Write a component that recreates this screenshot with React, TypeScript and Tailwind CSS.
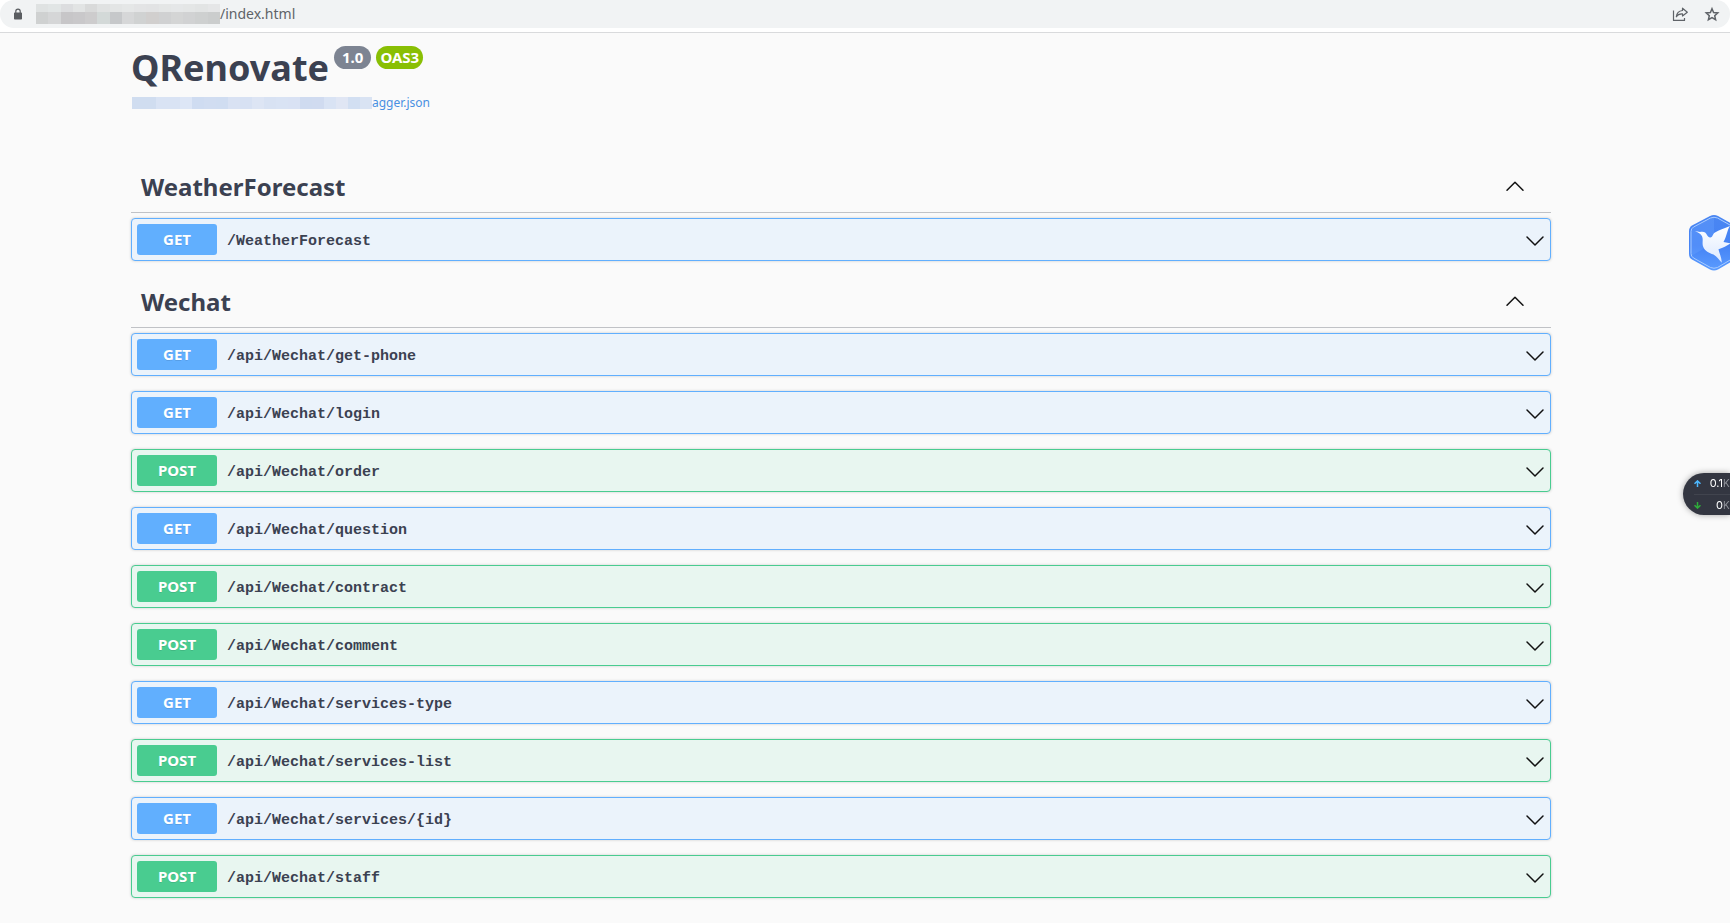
import React from 'react';

type Method = 'GET' | 'POST';

interface Operation {
  method: Method;
  path: string;
}

interface Tag {
  name: string;
  operations: Operation[];
}

const tags: Tag[] = [
  {
    name: 'WeatherForecast',
    operations: [{ method: 'GET', path: '/WeatherForecast' }],
  },
  {
    name: 'Wechat',
    operations: [
      { method: 'GET', path: '/api/Wechat/get-phone' },
      { method: 'GET', path: '/api/Wechat/login' },
      { method: 'POST', path: '/api/Wechat/order' },
      { method: 'GET', path: '/api/Wechat/question' },
      { method: 'POST', path: '/api/Wechat/contract' },
      { method: 'POST', path: '/api/Wechat/comment' },
      { method: 'GET', path: '/api/Wechat/services-type' },
      { method: 'POST', path: '/api/Wechat/services-list' },
      { method: 'GET', path: '/api/Wechat/services/{id}' },
      { method: 'POST', path: '/api/Wechat/staff' },
    ],
  },
];

const methodStyles: Record<Method, { row: string; badge: string }> = {
  GET: { row: 'border-[#61affe] bg-[#ebf3fb]', badge: 'bg-[#61affe]' },
  POST: { row: 'border-[#49cc90] bg-[#e8f6f0]', badge: 'bg-[#49cc90]' },
};

// host name is masked with a mosaic of flat tiles, two rows high
const hostTop = ['#dfe2e2', '#e1e5e5', '#dcdddf', '#e2e4e4', '#d9dada', '#e0e2e2', '#e3e5e5', '#e5e7e7', '#e3e4e5', '#e2e3e4', '#e4e6e6', '#e5e7e8', '#e4e6e6', '#e2e4e4', '#e5e6e7'];
const hostBottom = ['#cfd1d1', '#d5d6d7', '#c7c6c8', '#c9c8ca', '#cdcccd', '#d3d9d8', '#c6c8ca', '#d6d7d8', '#d0d2d2', '#d1cfce', '#d0d1d2', '#d4d5d5', '#d1d2d3', '#ced0d0', '#cbcdcd'];
const linkTiles = ['#d0ddf0', '#d0ddf0', '#d9e3f4', '#d9e3f4', '#dde6f6', '#cfdcf1', '#d1ddf1', '#d0ddf1', '#d9e2f3', '#d7e1f3', '#dde5f4', '#d8e2f3', '#d9e3f4', '#d9e2f4', '#cfdbf0', '#d0dbf0', '#d9e3f4', '#e0e6f4', '#d2dff2', '#d9e3f3'];

const Tiles: React.FC<{ colors: string[]; className: string }> = ({ colors, className }) => (
  <span className={`flex ${className}`}>
    {colors.map((c, i) => (
      <span key={i} className="h-full flex-1" style={{ backgroundColor: c }} />
    ))}
  </span>
);

const Chevron: React.FC<{ up?: boolean }> = ({ up }) => (
  <svg width="20" height="20" viewBox="0 0 20 20" fill="none" stroke="#111" strokeWidth="1.5" strokeLinecap="round" strokeLinejoin="round">
    {up ? <path d="M2 13.300L10 5.300L18 13.300" /> : <path d="M2 7L10 15L18 7" />}
  </svg>
);

const AddressBar: React.FC = () => (
  <header className="border-b border-[#d9dadc] bg-white pb-1">
    <div className="flex h-7 items-center rounded-full bg-[#f1f3f4] pr-[10px] pl-[14px]">
      <svg width="8" height="12" viewBox="0 0 8 12" fill="#5a5d61">
        <path d="M1.200 4.500V3.300a2.800 2.800 0 0 1 5.600 0V4.500H7.200a.8.8 0 0 1 .8.8v5.400a.8.8 0 0 1-.8.8H.8a.8.8 0 0 1-.8-.8V5.300a.8.8 0 0 1 .8-.8zM2.400 4.500h3.200V3.300a1.600 1.600 0 0 0-3.200 0z" fillRule="evenodd" />
      </svg>
      <span className="ml-[14px] flex w-[184px] flex-col">
        <Tiles colors={hostTop} className="h-2" />
        <Tiles colors={hostBottom} className="h-3" />
      </span>
      <span className="text-[14px] leading-5 text-[#5f6368]">/index.html</span>
      <div className="ml-auto flex items-center gap-4">
        <button aria-label="Share">
          <svg width="16" height="16" viewBox="0 0 16 16" fill="none" stroke="#5f6368" strokeWidth="1.2" strokeLinejoin="round">
            <path d="M1.500 4.500V14.400H12.500V12" />
            <path d="M10.500 2.200L15.300 6.200L10.500 10V7.800C7.500 7.600 5.500 8.600 4.300 10.800C4.700 7.200 6.900 4.900 10.500 4.500Z" />
          </svg>
        </button>
        <button aria-label="Bookmark">
          <svg width="16" height="16" viewBox="0 0 16 16" fill="none" stroke="#5f6368" strokeWidth="1.5" strokeLinejoin="miter">
            <path d="M8 2.700L9.600 6.500L13.800 6.900L10.700 9.700L11.600 13.700L8 11.600L4.400 13.700L5.300 9.700L2.200 6.900L6.400 6.500Z" />
          </svg>
        </button>
      </div>
    </div>
  </header>
);

const OperationRow: React.FC<{ operation: Operation }> = ({ operation }) => {
  const styles = methodStyles[operation.method];
  return (
    <button className={`flex w-full items-center rounded border p-[5px] text-left shadow-[0_0_3px_rgba(0,0,0,0.19)] ${styles.row}`}>
      <span className={`w-20 rounded-[3px] text-center text-[15px] leading-[31px] font-bold text-white [text-shadow:0_1px_0_rgba(0,0,0,0.1)] ${styles.badge}`}>
        {operation.method}
      </span>
      <span className="flex-1 px-[10px] pt-1 font-['Liberation_Mono',monospace] text-[15px] leading-5 font-bold text-[#3b4151]">
        {operation.path}
      </span>
      <Chevron />
    </button>
  );
};

const TagSection: React.FC<{ tag: Tag }> = ({ tag }) => (
  <section>
    <button className="mb-[5px] flex h-[52px] w-full items-center border-b border-[#3b4151]/30 pr-[26px] pl-[10px] text-left">
      <h2 className="flex-1 text-[24px] leading-8 font-bold text-[#3b4151]">{tag.name}</h2>
      <Chevron up />
    </button>
    <div className="flex flex-col gap-[15px] pb-[15px]">
      {tag.operations.map((op) => (
        <OperationRow key={op.path} operation={op} />
      ))}
    </div>
  </section>
);

const BirdWidget: React.FC = () => (
  <div className="fixed top-[214px] right-0 w-[42px] overflow-hidden">
    <svg width="52" height="58" viewBox="0 0 52 58">
      <defs>
        <linearGradient id="hex" x1="0" y1="0" x2="0" y2="1">
          <stop offset="0%" stopColor="#4a86f2" />
          <stop offset="55%" stopColor="#4583f5" />
          <stop offset="100%" stopColor="#5b9cff" />
        </linearGradient>
        <linearGradient id="wing" x1="0" y1="0" x2="0" y2="1">
          <stop offset="0%" stopColor="#ffffff" />
          <stop offset="100%" stopColor="#dce9ff" />
        </linearGradient>
      </defs>
      <path d="M22 2Q26 0 30 2L47 11.500Q50 13.500 50 17V40Q50 43.500 47 45.500L30 55.500Q26 57.500 22 55.500L4 45.500Q1 43.500 1 40V17Q1 13.500 4 11.500Z" fill="url(#hex)" />
      <path d="M26 29L3 42V17Q3 14.500 5.500 13L22.500 4Q26 2.500 26 2.500Z" fill="#6ba4ff" fillOpacity="0.35" />
      <path d="M22.500 4Q26 2.500 29.500 4L45.500 13Q48 14.500 48 17.500V39.500Q48 42.500 45.500 44L29.500 53.500Q26 55 22.500 53.500L5.500 44Q3 42.500 3 39.500V17.500Q3 14.500 5.500 13Z" fill="none" stroke="#a9ccff" strokeWidth="1" />
      <path d="M7 17L12 18C15 17 18 18 19 21C20 23 21.500 24 23 23.300C25 22.500 24.500 20 27 18.500C31 16 36 14.500 42 12C39 16 39 22 35.500 28L43 29.300C39 31.500 36 34 30.500 35.300C31.500 40 33.500 43 33.800 48.700C31 46 29 42.500 25.500 40.500C21 39 17 37 15.300 33C13.500 29 16 25 13.500 21.500C12 19 10 18.500 7 17Z" fill="url(#wing)" />
    </svg>
  </div>
);

const SpeedWidget: React.FC = () => (
  <div className="fixed top-[473px] right-0 h-[42px] w-[47px] overflow-hidden rounded-l-full bg-[#333641] pl-[11px] font-['Inter',sans-serif] text-[11px] leading-[21px] text-white shadow-[0_0_6px_rgba(0,0,0,0.35)]">
    <div className="flex items-center border-b border-[#41444e]">
      <svg className="shrink-0" width="7" height="7" viewBox="0 0 7 7" fill="none" stroke="#4db8ff" strokeWidth="1.500"><path d="M3.500 7V1M0.500 3.800L3.500 0.900L6.500 3.800" /></svg>
      <span className="w-[22px] shrink-0 text-right">0.1</span>
      <span className="text-[10px] text-[#8f929a]">K</span>
    </div>
    <div className="flex items-center">
      <svg className="shrink-0" width="7" height="7" viewBox="0 0 7 7" fill="none" stroke="#2fae3a" strokeWidth="1.500"><path d="M3.500 0V6M0.500 3.200L3.500 6.100L6.500 3.200" /></svg>
      <span className="w-[22px] shrink-0 text-right">0</span>
      <span className="text-[10px] text-[#8f929a]">K</span>
    </div>
  </div>
);

export default function App() {
  return (
    <div className="min-h-screen bg-[#fafafa] font-['Noto_Sans',sans-serif]">
      <AddressBar />
      <main className="pr-[179px] pl-[131px]">
        <div className="flex h-32 flex-col pt-[10px]">
          <div className="flex items-start gap-[5px]">
            <h1 className="text-[36px] leading-[50px] font-bold text-[#3b4151]">QRenovate</h1>
            <span className="mt-[3px] rounded-full bg-[#7d8492] px-2 text-[15px] leading-[23px] font-bold text-white">1.0</span>
            <span className="mt-[3px] rounded-full bg-[#89bf04] px-1 text-[15px] leading-[23px] font-bold text-white">OAS3</span>
          </div>
          <a href="#" className="flex items-center pl-px text-[12px] leading-5 text-[#4990e2]">
            <Tiles colors={linkTiles} className="h-3 w-60" />
            agger.json
          </a>
        </div>
        {tags.map((tag) => (
          <TagSection key={tag.name} tag={tag} />
        ))}
      </main>
      <BirdWidget />
      <SpeedWidget />
    </div>
  );
}
